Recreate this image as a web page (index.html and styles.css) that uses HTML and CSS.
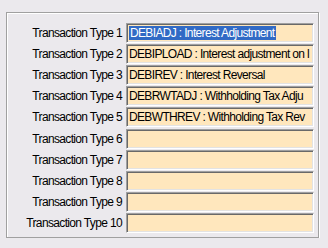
FILE: index.html
```html
<!DOCTYPE html>
<html lang="en">
<head>
    <meta charset="UTF-8">
    <title>Transaction Types</title>
    <link rel="stylesheet" href="styles.css">
</head>
<body>
    <div class="panel">
        <div class="grid">
            <label class="lbl">Transaction Type 1</label>
            <div class="field"><span class="sel">DEBIADJ : Interest Adjustment</span></div>
            <label class="lbl">Transaction Type 2</label>
            <div class="field">DEBIPLOAD : Interest adjustment on l</div>
            <label class="lbl">Transaction Type 3</label>
            <div class="field">DEBIREV : Interest Reversal</div>
            <label class="lbl">Transaction Type 4</label>
            <div class="field">DEBRWTADJ : Withholding Tax Adju</div>
            <label class="lbl">Transaction Type 5</label>
            <div class="field">DEBWTHREV : Withholding Tax Rev</div>
            <label class="lbl">Transaction Type 6</label>
            <div class="field"></div>
            <label class="lbl">Transaction Type 7</label>
            <div class="field"></div>
            <label class="lbl">Transaction Type 8</label>
            <div class="field"></div>
            <label class="lbl">Transaction Type 9</label>
            <div class="field"></div>
            <label class="lbl">Transaction Type 10</label>
            <div class="field"></div>
        </div>
    </div>
</body>
</html>
```

FILE: styles.css
```css
body {
    margin: 0;
    background-color: #ebe9ed;
    font-family: "Liberation Sans", Arial, sans-serif;
    font-size: 12px;
    letter-spacing: -0.65px;
    color: #000;
}
.panel {
    margin: 12px 0 0 6px;
    width: 311px;
    height: 224px;
    border: 1px solid #a0a0a0;
    box-shadow: inset 1px 1px 0 #fff, 1px 1px 0 #fff;
}
.grid {
    display: grid;
    grid-template-columns: 115px 188px;
    grid-auto-rows: 20px;
    column-gap: 4px;
    row-gap: 1.11px;
    padding-top: 10px;
}
.lbl {
    text-align: right;
    line-height: 20px;
    white-space: nowrap;
}
.field {
    box-sizing: border-box;
    background-color: #ffe7bd;
    border: 1px solid;
    border-color: #a0a0a0 #fff #fff #a0a0a0;
    box-shadow: inset 1px 1px 0 #696969, inset -1px -1px 0 #e3e3e3;
    padding: 2px 0 0 2px;
    line-height: 14px;
    white-space: nowrap;
    overflow: hidden;
}
.sel {
    display: inline-block;
    background-color: #316ac5;
    color: #fff;
    padding: 0 1px 0 1px;
}
```
